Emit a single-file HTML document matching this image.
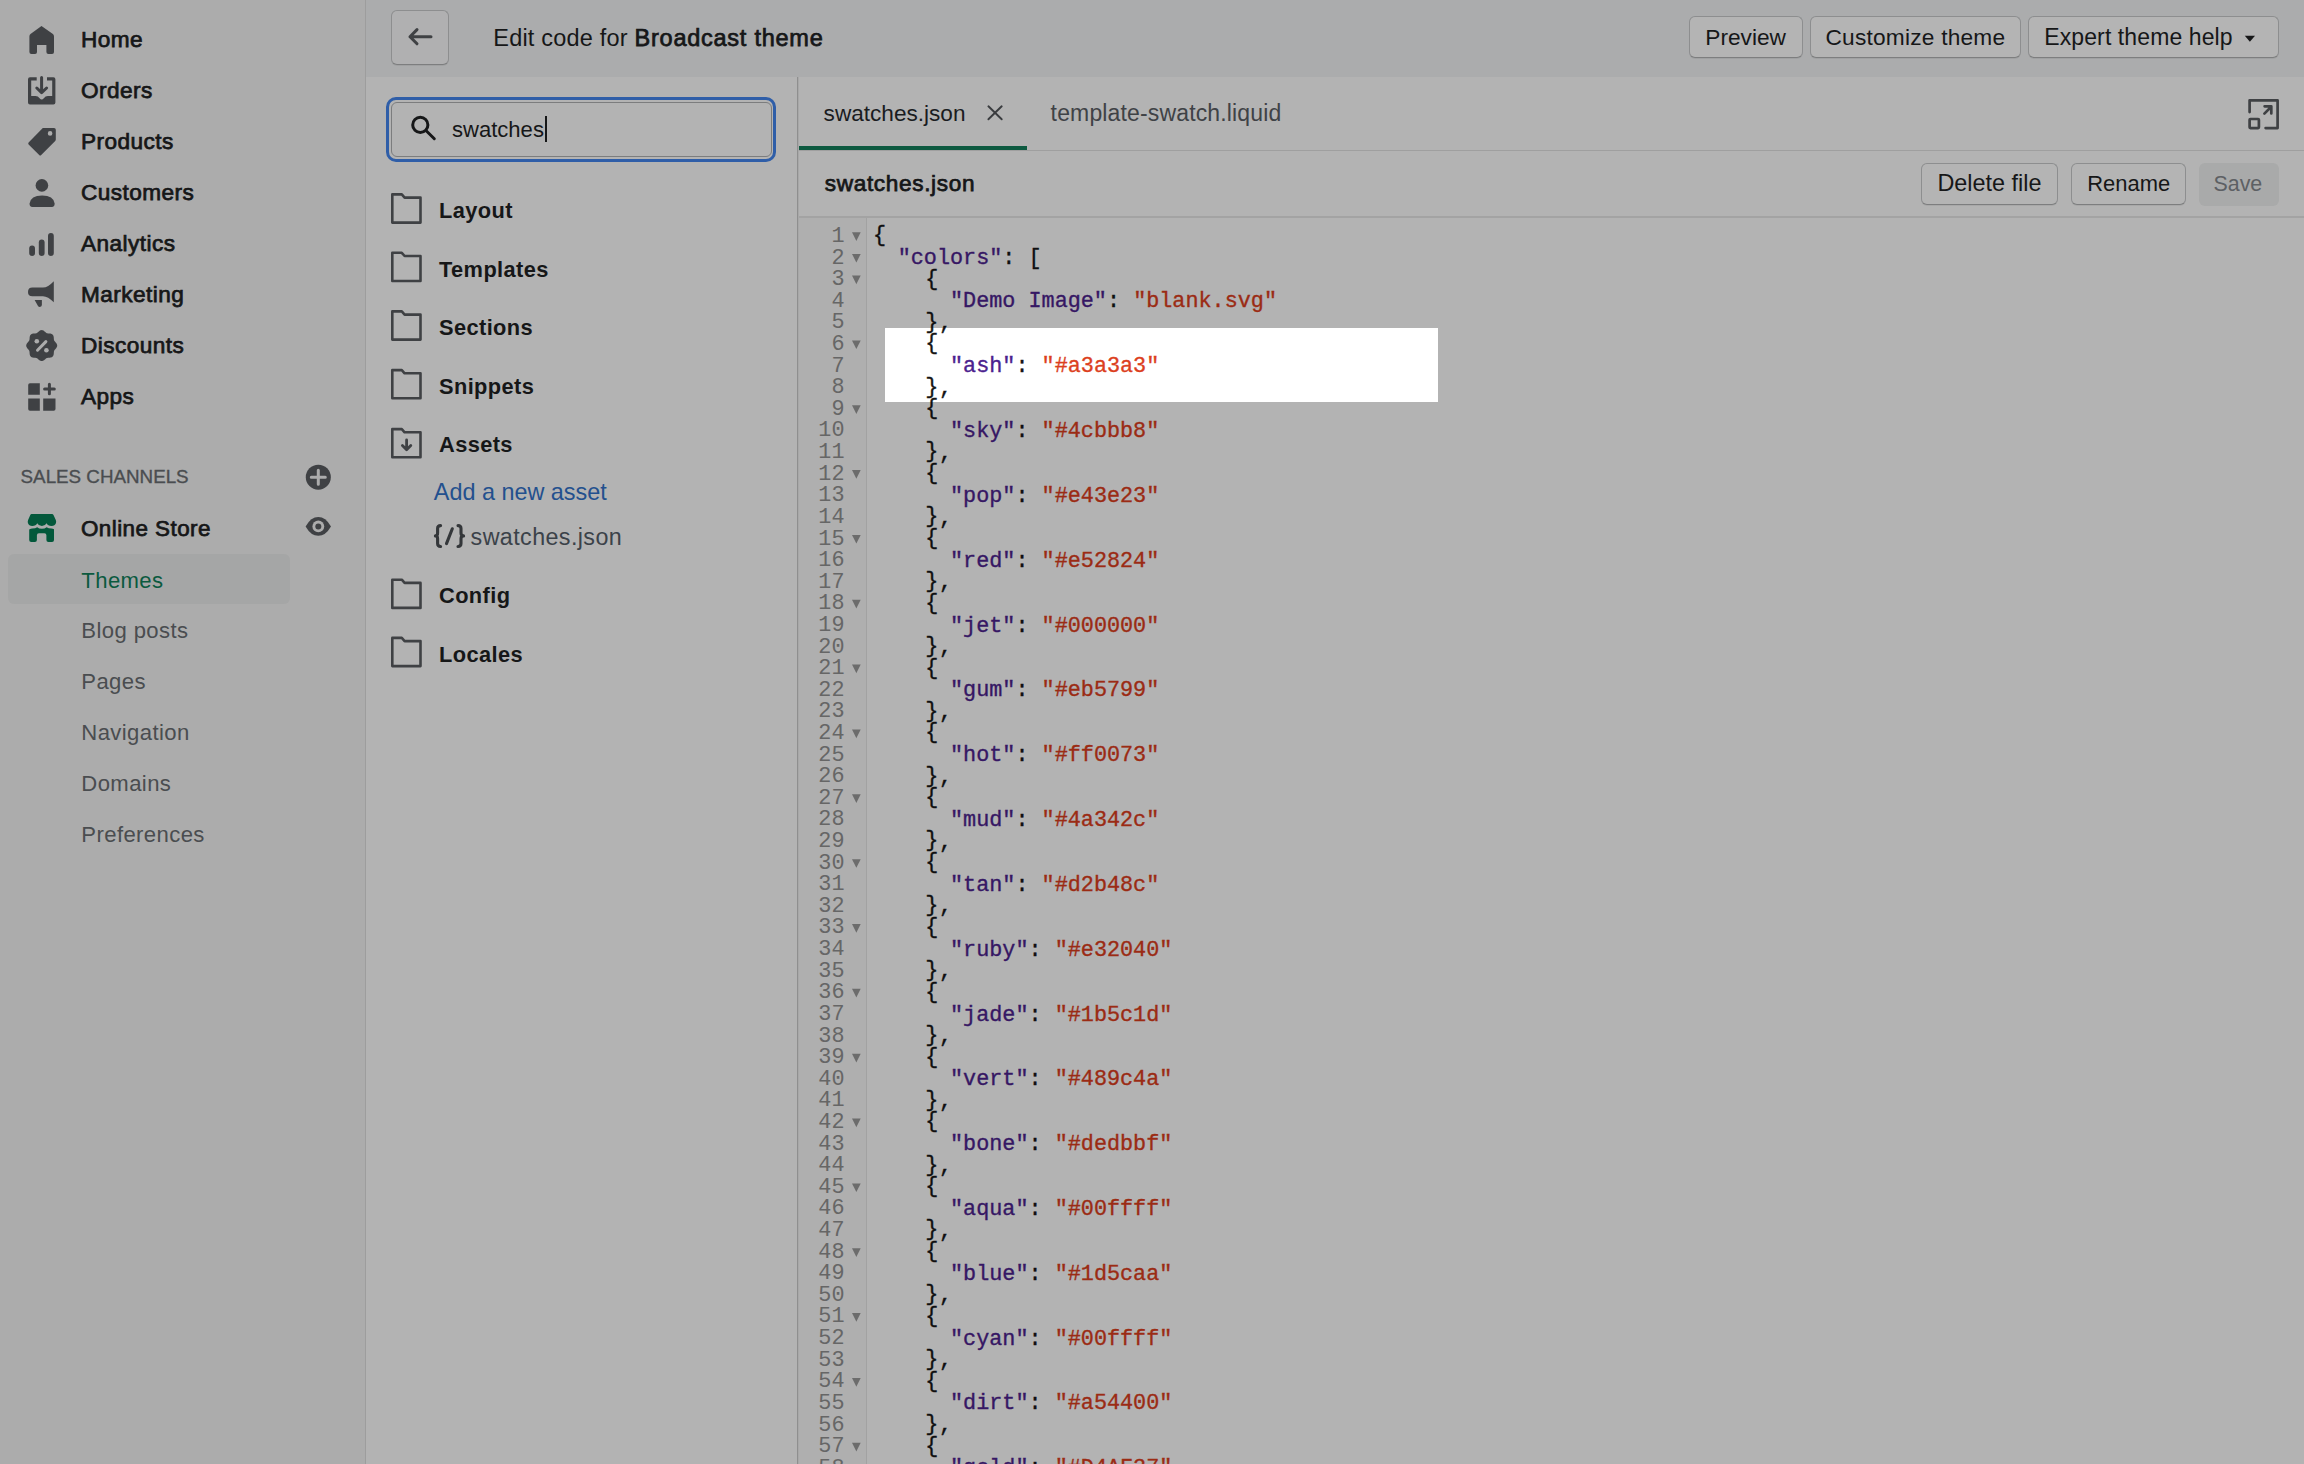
<!DOCTYPE html><html><head><meta charset="utf-8"><title>Edit code</title><style>
html,body{margin:0;padding:0;width:2304px;height:1464px;overflow:hidden;background:#b3b3b3;}
body{position:relative;font-family:"Liberation Sans", sans-serif;}
.t{position:absolute;white-space:pre;}
.btn{position:absolute;border:1px solid #8d8e8f;border-bottom-color:#7d7e7f;border-radius:6px;background:#b4b4b4;box-shadow:0 1px 0 rgba(0,0,0,0.06);}
.code{position:absolute;font-family:"Liberation Mono", monospace;font-size:21.8px;line-height:21.616px;white-space:pre;-webkit-text-stroke:0.35px currentColor;}
.cl{height:21.616px;}
.gn{text-align:right;color:#666666;-webkit-text-stroke:0px;}
.p{color:#0f0f10;}
.k{color:#361764;}
.s{color:#9b2b14;}
.b{position:relative;left:1.5px;top:-1.2px;}
.c{position:relative;left:2px;}
.hl .p{color:#151515;}
.hl .k{color:#4b228e;}
.hl .s{color:#dc3f1e;}
</style></head><body>
<div style="position:absolute;left:0;top:0;width:365px;height:1464px;background:#acacac"></div><div style="position:absolute;left:365px;top:0;width:1px;height:1464px;background:#9d9d9d"></div><div style="position:absolute;left:366px;top:0;width:1938px;height:77px;background:#abacad"></div><div style="position:absolute;left:366px;top:77px;width:432px;height:1387px;background:#b3b3b3"></div><div style="position:absolute;left:797px;top:77px;width:1px;height:1387px;background:#8f8f8f"></div><div style="position:absolute;left:798px;top:77px;width:1px;height:1387px;background:#a8a8a8"></div><div style="position:absolute;left:799px;top:77px;width:1505px;height:1387px;background:#b3b3b3"></div><div style="position:absolute;left:799px;top:150px;width:1505px;height:1px;background:#9f9f9f"></div><div style="position:absolute;left:799px;top:146px;width:228px;height:4px;background:#0d5a40"></div><div style="position:absolute;left:799px;top:216px;width:1505px;height:2px;background:#a3a3a3"></div><div style="position:absolute;left:799px;top:218px;width:67px;height:1246px;background:#afafaf"></div><div style="position:absolute;left:866px;top:218px;width:1px;height:1246px;background:#a2a2a2"></div><div style="position:absolute;left:8px;top:554.2px;width:282px;height:49.4px;border-radius:6px;background:#a5a6a6"></div><div class="t" style="left:81.0px;top:29.46px;font-size:22.6px;line-height:22.6px;color:#161718;font-weight:400;-webkit-text-stroke:0.75px currentColor;letter-spacing:0.45px;">Home</div>
<div class="t" style="left:81.0px;top:80.46px;font-size:22.6px;line-height:22.6px;color:#161718;font-weight:400;-webkit-text-stroke:0.75px currentColor;letter-spacing:0.45px;">Orders</div>
<div class="t" style="left:81.0px;top:131.46px;font-size:22.6px;line-height:22.6px;color:#161718;font-weight:400;-webkit-text-stroke:0.75px currentColor;letter-spacing:0.45px;">Products</div>
<div class="t" style="left:81.0px;top:182.46px;font-size:22.6px;line-height:22.6px;color:#161718;font-weight:400;-webkit-text-stroke:0.75px currentColor;letter-spacing:0.45px;">Customers</div>
<div class="t" style="left:81.0px;top:233.46px;font-size:22.6px;line-height:22.6px;color:#161718;font-weight:400;-webkit-text-stroke:0.75px currentColor;letter-spacing:0.45px;">Analytics</div>
<div class="t" style="left:81.0px;top:284.46px;font-size:22.6px;line-height:22.6px;color:#161718;font-weight:400;-webkit-text-stroke:0.75px currentColor;letter-spacing:0.45px;">Marketing</div>
<div class="t" style="left:81.0px;top:335.46px;font-size:22.6px;line-height:22.6px;color:#161718;font-weight:400;-webkit-text-stroke:0.75px currentColor;letter-spacing:0.45px;">Discounts</div>
<div class="t" style="left:81.0px;top:386.46px;font-size:22.6px;line-height:22.6px;color:#161718;font-weight:400;-webkit-text-stroke:0.75px currentColor;letter-spacing:0.45px;">Apps</div>
<div class="t" style="left:20.6px;top:467.98px;font-size:18.8px;line-height:18.8px;color:#4a4d50;font-weight:400;-webkit-text-stroke:0.35px currentColor;">SALES CHANNELS</div>
<div class="t" style="left:81.0px;top:517.53px;font-size:22.4px;line-height:22.4px;color:#161718;font-weight:400;-webkit-text-stroke:0.75px currentColor;letter-spacing:0.45px;">Online Store</div>
<div class="t" style="left:81.3px;top:569.69px;font-size:22.1px;line-height:22.1px;color:#0b5a3f;font-weight:400;letter-spacing:0.4px;">Themes</div>
<div class="t" style="left:81.3px;top:619.89px;font-size:22.1px;line-height:22.1px;color:#4a4d50;font-weight:400;letter-spacing:0.4px;">Blog posts</div>
<div class="t" style="left:81.3px;top:670.89px;font-size:22.1px;line-height:22.1px;color:#4a4d50;font-weight:400;letter-spacing:0.4px;">Pages</div>
<div class="t" style="left:81.3px;top:721.89px;font-size:22.1px;line-height:22.1px;color:#4a4d50;font-weight:400;letter-spacing:0.4px;">Navigation</div>
<div class="t" style="left:81.3px;top:772.89px;font-size:22.1px;line-height:22.1px;color:#4a4d50;font-weight:400;letter-spacing:0.4px;">Domains</div>
<div class="t" style="left:81.3px;top:823.89px;font-size:22.1px;line-height:22.1px;color:#4a4d50;font-weight:400;letter-spacing:0.4px;">Preferences</div>
<div class="btn" style="left:391px;top:9.6px;width:56px;height:53px;background:#b0b0b1"></div><div class="t" style="left:493.3px;top:27.10px;font-size:23.5px;line-height:23.5px;color:#161718;font-weight:400;"><span style="letter-spacing:0.2px">Edit code for </span><span style="-webkit-text-stroke:0.75px currentColor;letter-spacing:0.75px">Broadcast theme</span></div>
<div class="btn" style="left:1688.5px;top:15.5px;width:112.0px;height:40.5px;"></div>
<div class="t" style="left:1705.3px;top:26.08px;font-size:22.7px;line-height:22.7px;color:#161718;font-weight:400;">Preview</div>
<div class="btn" style="left:1810px;top:15.5px;width:209px;height:40.5px;"></div>
<div class="t" style="left:1825.5px;top:26.08px;font-size:22.7px;line-height:22.7px;color:#161718;font-weight:400;letter-spacing:0.22px;">Customize theme</div>
<div class="btn" style="left:2028px;top:15.5px;width:248.5px;height:40.5px;"></div>
<div class="t" style="left:2044.3px;top:25.83px;font-size:23.0px;line-height:23.0px;color:#161718;font-weight:400;letter-spacing:0.1px;">Expert theme help</div>
<div style="position:absolute;left:386px;top:97px;width:384px;height:59px;border:3px solid #2f5ea8;border-radius:10px;box-sizing:content-box"></div><div style="position:absolute;left:390.5px;top:101.5px;width:379px;height:53px;border:1.5px solid #7c7d7e;border-radius:6px;background:#b3b3b3"></div><div class="t" style="left:452.0px;top:119.33px;font-size:22.05px;line-height:22.05px;color:#161718;font-weight:400;">swatches</div>
<div style="position:absolute;left:545px;top:116px;width:2px;height:26px;background:#161718"></div><div class="t" style="left:439.0px;top:200.14px;font-size:21.8px;line-height:21.8px;color:#161718;font-weight:700;letter-spacing:0.4px;">Layout</div>
<div class="t" style="left:439.0px;top:258.54px;font-size:21.8px;line-height:21.8px;color:#161718;font-weight:700;letter-spacing:0.4px;">Templates</div>
<div class="t" style="left:439.0px;top:317.14px;font-size:21.8px;line-height:21.8px;color:#161718;font-weight:700;letter-spacing:0.4px;">Sections</div>
<div class="t" style="left:439.0px;top:375.84px;font-size:21.8px;line-height:21.8px;color:#161718;font-weight:700;letter-spacing:0.4px;">Snippets</div>
<div class="t" style="left:439.0px;top:434.14px;font-size:21.8px;line-height:21.8px;color:#161718;font-weight:700;letter-spacing:0.4px;">Assets</div>
<div class="t" style="left:439.0px;top:585.44px;font-size:21.8px;line-height:21.8px;color:#161718;font-weight:700;letter-spacing:0.4px;">Config</div>
<div class="t" style="left:439.0px;top:643.64px;font-size:21.8px;line-height:21.8px;color:#161718;font-weight:700;letter-spacing:0.4px;">Locales</div>
<div class="t" style="left:433.8px;top:480.99px;font-size:23.4px;line-height:23.4px;color:#23508e;font-weight:400;">Add a new asset</div>
<div class="t" style="left:470.6px;top:525.67px;font-size:23.3px;line-height:23.3px;color:#3b4249;font-weight:400;letter-spacing:0.4px;">swatches.json</div>
<div class="t" style="left:823.6px;top:102.76px;font-size:22.6px;line-height:22.6px;color:#1a1c1f;font-weight:400;">swatches.json</div>
<div class="t" style="left:1050.6px;top:102.33px;font-size:23.0px;line-height:23.0px;color:#3f4246;font-weight:400;letter-spacing:0.15px;">template-swatch.liquid</div>
<div class="t" style="left:824.8px;top:172.76px;font-size:22.6px;line-height:22.6px;color:#161718;font-weight:400;-webkit-text-stroke:0.75px currentColor;letter-spacing:0.65px;">swatches.json</div>
<div class="btn" style="left:1921px;top:162.7px;width:135px;height:39.900000000000006px;"></div>
<div class="t" style="left:1937.4px;top:172.09px;font-size:23.4px;line-height:23.4px;color:#161718;font-weight:400;">Delete file</div>
<div class="btn" style="left:2070.7px;top:162.7px;width:112.90000000000009px;height:39.900000000000006px;"></div>
<div class="t" style="left:2087.2px;top:173.31px;font-size:21.95px;line-height:21.95px;color:#161718;font-weight:400;">Rename</div>
<div style="position:absolute;left:2199px;top:162.5px;width:80px;height:43px;border-radius:6px;background:#a9aaaa"></div><div class="t" style="left:2213.5px;top:173.78px;font-size:21.4px;line-height:21.4px;color:#5d6064;font-weight:400;">Save</div>
<div class="code" style="left:871.5px;top:226.59px"><div class="cl"><span class="p"><span class="b">{</span></span></div><div class="cl">  <span class="k">"colors"</span><span class="p">: [</span></div><div class="cl">    <span class="p"><span class="b">{</span></span></div><div class="cl">      <span class="k">"Demo Image"</span><span class="p">: </span><span class="s">"blank.svg"</span></div><div class="cl">    <span class="p"><span class="b">}</span><span class="c">,</span></span></div><div class="cl">    <span class="p"><span class="b">{</span></span></div><div class="cl">      <span class="k">"ash"</span><span class="p">: </span><span class="s">"#a3a3a3"</span></div><div class="cl">    <span class="p"><span class="b">}</span><span class="c">,</span></span></div><div class="cl">    <span class="p"><span class="b">{</span></span></div><div class="cl">      <span class="k">"sky"</span><span class="p">: </span><span class="s">"#4cbbb8"</span></div><div class="cl">    <span class="p"><span class="b">}</span><span class="c">,</span></span></div><div class="cl">    <span class="p"><span class="b">{</span></span></div><div class="cl">      <span class="k">"pop"</span><span class="p">: </span><span class="s">"#e43e23"</span></div><div class="cl">    <span class="p"><span class="b">}</span><span class="c">,</span></span></div><div class="cl">    <span class="p"><span class="b">{</span></span></div><div class="cl">      <span class="k">"red"</span><span class="p">: </span><span class="s">"#e52824"</span></div><div class="cl">    <span class="p"><span class="b">}</span><span class="c">,</span></span></div><div class="cl">    <span class="p"><span class="b">{</span></span></div><div class="cl">      <span class="k">"jet"</span><span class="p">: </span><span class="s">"#000000"</span></div><div class="cl">    <span class="p"><span class="b">}</span><span class="c">,</span></span></div><div class="cl">    <span class="p"><span class="b">{</span></span></div><div class="cl">      <span class="k">"gum"</span><span class="p">: </span><span class="s">"#eb5799"</span></div><div class="cl">    <span class="p"><span class="b">}</span><span class="c">,</span></span></div><div class="cl">    <span class="p"><span class="b">{</span></span></div><div class="cl">      <span class="k">"hot"</span><span class="p">: </span><span class="s">"#ff0073"</span></div><div class="cl">    <span class="p"><span class="b">}</span><span class="c">,</span></span></div><div class="cl">    <span class="p"><span class="b">{</span></span></div><div class="cl">      <span class="k">"mud"</span><span class="p">: </span><span class="s">"#4a342c"</span></div><div class="cl">    <span class="p"><span class="b">}</span><span class="c">,</span></span></div><div class="cl">    <span class="p"><span class="b">{</span></span></div><div class="cl">      <span class="k">"tan"</span><span class="p">: </span><span class="s">"#d2b48c"</span></div><div class="cl">    <span class="p"><span class="b">}</span><span class="c">,</span></span></div><div class="cl">    <span class="p"><span class="b">{</span></span></div><div class="cl">      <span class="k">"ruby"</span><span class="p">: </span><span class="s">"#e32040"</span></div><div class="cl">    <span class="p"><span class="b">}</span><span class="c">,</span></span></div><div class="cl">    <span class="p"><span class="b">{</span></span></div><div class="cl">      <span class="k">"jade"</span><span class="p">: </span><span class="s">"#1b5c1d"</span></div><div class="cl">    <span class="p"><span class="b">}</span><span class="c">,</span></span></div><div class="cl">    <span class="p"><span class="b">{</span></span></div><div class="cl">      <span class="k">"vert"</span><span class="p">: </span><span class="s">"#489c4a"</span></div><div class="cl">    <span class="p"><span class="b">}</span><span class="c">,</span></span></div><div class="cl">    <span class="p"><span class="b">{</span></span></div><div class="cl">      <span class="k">"bone"</span><span class="p">: </span><span class="s">"#dedbbf"</span></div><div class="cl">    <span class="p"><span class="b">}</span><span class="c">,</span></span></div><div class="cl">    <span class="p"><span class="b">{</span></span></div><div class="cl">      <span class="k">"aqua"</span><span class="p">: </span><span class="s">"#00ffff"</span></div><div class="cl">    <span class="p"><span class="b">}</span><span class="c">,</span></span></div><div class="cl">    <span class="p"><span class="b">{</span></span></div><div class="cl">      <span class="k">"blue"</span><span class="p">: </span><span class="s">"#1d5caa"</span></div><div class="cl">    <span class="p"><span class="b">}</span><span class="c">,</span></span></div><div class="cl">    <span class="p"><span class="b">{</span></span></div><div class="cl">      <span class="k">"cyan"</span><span class="p">: </span><span class="s">"#00ffff"</span></div><div class="cl">    <span class="p"><span class="b">}</span><span class="c">,</span></span></div><div class="cl">    <span class="p"><span class="b">{</span></span></div><div class="cl">      <span class="k">"dirt"</span><span class="p">: </span><span class="s">"#a54400"</span></div><div class="cl">    <span class="p"><span class="b">}</span><span class="c">,</span></span></div><div class="cl">    <span class="p"><span class="b">{</span></span></div><div class="cl">      <span class="k">"gold"</span><span class="p">: </span><span class="s">"#D4AF37"</span></div><div class="cl">    <span class="p"><span class="b">}</span><span class="c">,</span></span></div></div><div class="code gn" style="left:799px;top:225.99px;width:45.5px"><div class="cl">1</div><div class="cl">2</div><div class="cl">3</div><div class="cl">4</div><div class="cl">5</div><div class="cl">6</div><div class="cl">7</div><div class="cl">8</div><div class="cl">9</div><div class="cl">10</div><div class="cl">11</div><div class="cl">12</div><div class="cl">13</div><div class="cl">14</div><div class="cl">15</div><div class="cl">16</div><div class="cl">17</div><div class="cl">18</div><div class="cl">19</div><div class="cl">20</div><div class="cl">21</div><div class="cl">22</div><div class="cl">23</div><div class="cl">24</div><div class="cl">25</div><div class="cl">26</div><div class="cl">27</div><div class="cl">28</div><div class="cl">29</div><div class="cl">30</div><div class="cl">31</div><div class="cl">32</div><div class="cl">33</div><div class="cl">34</div><div class="cl">35</div><div class="cl">36</div><div class="cl">37</div><div class="cl">38</div><div class="cl">39</div><div class="cl">40</div><div class="cl">41</div><div class="cl">42</div><div class="cl">43</div><div class="cl">44</div><div class="cl">45</div><div class="cl">46</div><div class="cl">47</div><div class="cl">48</div><div class="cl">49</div><div class="cl">50</div><div class="cl">51</div><div class="cl">52</div><div class="cl">53</div><div class="cl">54</div><div class="cl">55</div><div class="cl">56</div><div class="cl">57</div><div class="cl">58</div><div class="cl">59</div></div><div style="position:absolute;left:885px;top:328.1px;width:553px;height:74.2px;background:#fff;overflow:hidden"><div class="code hl" style="left:-13.5px;top:-101.51px"><div class="cl"><span class="p"><span class="b">{</span></span></div><div class="cl">  <span class="k">"colors"</span><span class="p">: [</span></div><div class="cl">    <span class="p"><span class="b">{</span></span></div><div class="cl">      <span class="k">"Demo Image"</span><span class="p">: </span><span class="s">"blank.svg"</span></div><div class="cl">    <span class="p"><span class="b">}</span><span class="c">,</span></span></div><div class="cl">    <span class="p"><span class="b">{</span></span></div><div class="cl">      <span class="k">"ash"</span><span class="p">: </span><span class="s">"#a3a3a3"</span></div><div class="cl">    <span class="p"><span class="b">}</span><span class="c">,</span></span></div><div class="cl">    <span class="p"><span class="b">{</span></span></div><div class="cl">      <span class="k">"sky"</span><span class="p">: </span><span class="s">"#4cbbb8"</span></div><div class="cl">    <span class="p"><span class="b">}</span><span class="c">,</span></span></div><div class="cl">    <span class="p"><span class="b">{</span></span></div><div class="cl">      <span class="k">"pop"</span><span class="p">: </span><span class="s">"#e43e23"</span></div><div class="cl">    <span class="p"><span class="b">}</span><span class="c">,</span></span></div><div class="cl">    <span class="p"><span class="b">{</span></span></div><div class="cl">      <span class="k">"red"</span><span class="p">: </span><span class="s">"#e52824"</span></div><div class="cl">    <span class="p"><span class="b">}</span><span class="c">,</span></span></div><div class="cl">    <span class="p"><span class="b">{</span></span></div><div class="cl">      <span class="k">"jet"</span><span class="p">: </span><span class="s">"#000000"</span></div><div class="cl">    <span class="p"><span class="b">}</span><span class="c">,</span></span></div><div class="cl">    <span class="p"><span class="b">{</span></span></div><div class="cl">      <span class="k">"gum"</span><span class="p">: </span><span class="s">"#eb5799"</span></div><div class="cl">    <span class="p"><span class="b">}</span><span class="c">,</span></span></div><div class="cl">    <span class="p"><span class="b">{</span></span></div><div class="cl">      <span class="k">"hot"</span><span class="p">: </span><span class="s">"#ff0073"</span></div><div class="cl">    <span class="p"><span class="b">}</span><span class="c">,</span></span></div><div class="cl">    <span class="p"><span class="b">{</span></span></div><div class="cl">      <span class="k">"mud"</span><span class="p">: </span><span class="s">"#4a342c"</span></div><div class="cl">    <span class="p"><span class="b">}</span><span class="c">,</span></span></div><div class="cl">    <span class="p"><span class="b">{</span></span></div><div class="cl">      <span class="k">"tan"</span><span class="p">: </span><span class="s">"#d2b48c"</span></div><div class="cl">    <span class="p"><span class="b">}</span><span class="c">,</span></span></div><div class="cl">    <span class="p"><span class="b">{</span></span></div><div class="cl">      <span class="k">"ruby"</span><span class="p">: </span><span class="s">"#e32040"</span></div><div class="cl">    <span class="p"><span class="b">}</span><span class="c">,</span></span></div><div class="cl">    <span class="p"><span class="b">{</span></span></div><div class="cl">      <span class="k">"jade"</span><span class="p">: </span><span class="s">"#1b5c1d"</span></div><div class="cl">    <span class="p"><span class="b">}</span><span class="c">,</span></span></div><div class="cl">    <span class="p"><span class="b">{</span></span></div><div class="cl">      <span class="k">"vert"</span><span class="p">: </span><span class="s">"#489c4a"</span></div><div class="cl">    <span class="p"><span class="b">}</span><span class="c">,</span></span></div><div class="cl">    <span class="p"><span class="b">{</span></span></div><div class="cl">      <span class="k">"bone"</span><span class="p">: </span><span class="s">"#dedbbf"</span></div><div class="cl">    <span class="p"><span class="b">}</span><span class="c">,</span></span></div><div class="cl">    <span class="p"><span class="b">{</span></span></div><div class="cl">      <span class="k">"aqua"</span><span class="p">: </span><span class="s">"#00ffff"</span></div><div class="cl">    <span class="p"><span class="b">}</span><span class="c">,</span></span></div><div class="cl">    <span class="p"><span class="b">{</span></span></div><div class="cl">      <span class="k">"blue"</span><span class="p">: </span><span class="s">"#1d5caa"</span></div><div class="cl">    <span class="p"><span class="b">}</span><span class="c">,</span></span></div><div class="cl">    <span class="p"><span class="b">{</span></span></div><div class="cl">      <span class="k">"cyan"</span><span class="p">: </span><span class="s">"#00ffff"</span></div><div class="cl">    <span class="p"><span class="b">}</span><span class="c">,</span></span></div><div class="cl">    <span class="p"><span class="b">{</span></span></div><div class="cl">      <span class="k">"dirt"</span><span class="p">: </span><span class="s">"#a54400"</span></div><div class="cl">    <span class="p"><span class="b">}</span><span class="c">,</span></span></div><div class="cl">    <span class="p"><span class="b">{</span></span></div><div class="cl">      <span class="k">"gold"</span><span class="p">: </span><span class="s">"#D4AF37"</span></div><div class="cl">    <span class="p"><span class="b">}</span><span class="c">,</span></span></div></div></div><svg style="position:absolute;left:0;top:0" width="2304" height="1464" viewBox="0 0 2304 1464"><path fill="#3f4144" d="M41.5 26.1 L52.9 34.1 Q54 34.9 54 36.4 V52 Q54 54 52 54 H48.4 Q46.4 54 46.4 52 V44.9 H37 V52 Q37 54 35 54 H31.4 Q29.4 54 29.4 52 V36.4 Q29.4 34.9 30.5 34.1 Z"/><path fill="#3f4144" d="M30 77.2 H36.7 V80.6 H31.2 V95.9 H35.5 Q38 95.9 39.6 98.2 Q41.7 100.6 43.8 98.2 Q45.4 95.9 47.9 95.9 H52.2 V80.6 H47 V77.2 H53.4 Q55.4 77.2 55.4 79.2 V102.6 Q55.4 104.6 53.4 104.6 H30 Q28 104.6 28 102.6 V79.2 Q28 77.2 30 77.2 Z"/><path fill="none" stroke="#3f4144" stroke-width="3" stroke-linecap="round" stroke-linejoin="round" d="M41.6 77.6 V92 M36.8 88 L41.6 92.6 L46.6 88"/><path fill="#3f4144" fill-rule="evenodd" d="M42.8 128 H54 Q55.8 128 55.8 129.8 V139.6 Q55.8 140.4 55.2 141 L41.2 155 Q40.2 156 39.2 155 L28.6 144.4 Q27.8 143.5 28.6 142.6 Z M50.1 133.4 m-2.3 0 a2.3 2.3 0 1 0 4.6 0 a2.3 2.3 0 1 0 -4.6 0 Z"/><circle fill="#3f4144" cx="41.9" cy="185.4" r="6.3"/><path fill="#3f4144" d="M29.6 203.6 Q30.6 195.6 42.1 195.6 Q53.6 195.6 54.6 203.6 Q54.8 207 51.8 207 H32.4 Q29.4 207 29.6 203.6 Z"/><rect fill="#3f4144" x="29.2" y="245.6" width="5.8" height="10.3" rx="2.9"/><rect fill="#3f4144" x="38.8" y="239.5" width="5.8" height="16.4" rx="2.9"/><rect fill="#3f4144" x="48" y="233" width="5.8" height="22.9" rx="2.9"/><path fill="#3f4144" d="M32.4 287.6 H43 Q48 287.4 53.8 281.2 V302.3 Q48 296.4 43 296.2 H32.4 Q28 296.2 28 291.9 Q28 287.6 32.4 287.6 Z"/><path fill="#3f4144" d="M34.6 299.9 H41.9 V304.8 Q41.9 306.9 39.9 306.9 Q38.6 306.9 38 305.9 Z"/><path fill="#3f4144" d="M41.70 330.10 L42.31 330.16 L42.90 330.34 L43.47 330.62 L44.02 330.97 L44.53 331.38 L45.01 331.80 L45.48 332.21 L45.93 332.58 L46.39 332.89 L46.87 333.13 L47.37 333.30 L47.92 333.40 L48.50 333.46 L49.11 333.50 L49.76 333.54 L50.40 333.62 L51.04 333.75 L51.64 333.96 L52.19 334.25 L52.66 334.64 L53.05 335.11 L53.34 335.66 L53.55 336.26 L53.68 336.90 L53.76 337.54 L53.80 338.19 L53.84 338.80 L53.90 339.38 L54.00 339.93 L54.17 340.43 L54.41 340.91 L54.72 341.37 L55.09 341.82 L55.50 342.29 L55.92 342.77 L56.33 343.28 L56.68 343.83 L56.96 344.40 L57.14 344.99 L57.20 345.60 L57.14 346.21 L56.96 346.80 L56.68 347.37 L56.33 347.92 L55.92 348.43 L55.50 348.91 L55.09 349.38 L54.72 349.83 L54.41 350.29 L54.17 350.77 L54.00 351.27 L53.90 351.82 L53.84 352.40 L53.80 353.01 L53.76 353.66 L53.68 354.30 L53.55 354.94 L53.34 355.54 L53.05 356.09 L52.66 356.56 L52.19 356.95 L51.64 357.24 L51.04 357.45 L50.40 357.58 L49.76 357.66 L49.11 357.70 L48.50 357.74 L47.92 357.80 L47.37 357.90 L46.87 358.07 L46.39 358.31 L45.93 358.62 L45.48 358.99 L45.01 359.40 L44.53 359.82 L44.02 360.23 L43.47 360.58 L42.90 360.86 L42.31 361.04 L41.70 361.10 L41.09 361.04 L40.50 360.86 L39.93 360.58 L39.38 360.23 L38.87 359.82 L38.39 359.40 L37.92 358.99 L37.47 358.62 L37.01 358.31 L36.53 358.07 L36.03 357.90 L35.48 357.80 L34.90 357.74 L34.29 357.70 L33.64 357.66 L33.00 357.58 L32.36 357.45 L31.76 357.24 L31.21 356.95 L30.74 356.56 L30.35 356.09 L30.06 355.54 L29.85 354.94 L29.72 354.30 L29.64 353.66 L29.60 353.01 L29.56 352.40 L29.50 351.82 L29.40 351.27 L29.23 350.77 L28.99 350.29 L28.68 349.83 L28.31 349.38 L27.90 348.91 L27.48 348.43 L27.07 347.92 L26.72 347.37 L26.44 346.80 L26.26 346.21 L26.20 345.60 L26.26 344.99 L26.44 344.40 L26.72 343.83 L27.07 343.28 L27.48 342.77 L27.90 342.29 L28.31 341.82 L28.68 341.37 L28.99 340.91 L29.23 340.43 L29.40 339.93 L29.50 339.38 L29.56 338.80 L29.60 338.19 L29.64 337.54 L29.72 336.90 L29.85 336.26 L30.06 335.66 L30.35 335.11 L30.74 334.64 L31.21 334.25 L31.76 333.96 L32.36 333.75 L33.00 333.62 L33.64 333.54 L34.29 333.50 L34.90 333.46 L35.48 333.40 L36.03 333.30 L36.53 333.13 L37.01 332.89 L37.47 332.58 L37.92 332.21 L38.39 331.80 L38.87 331.38 L39.38 330.97 L39.93 330.62 L40.50 330.34 L41.09 330.16 L41.70 330.10 Z"/><circle fill="#acacac" cx="36.8" cy="341.2" r="2.3"/><circle fill="#acacac" cx="46.4" cy="350.2" r="2.3"/><path stroke="#acacac" stroke-width="3" stroke-linecap="round" d="M37.5 350.2 L45.9 341.6"/><path fill="#3f4144" d="M30 383.2 H39.8 V394.8 H28.2 V385 Q28.2 383.2 30 383.2 Z"/><path fill="#3f4144" d="M28.2 398.6 H39.8 V410.8 H30 Q28.2 410.8 28.2 409 Z"/><path fill="#3f4144" d="M43.2 398.6 H55.5 V409 Q55.5 410.8 53.7 410.8 H43.2 Z"/><path stroke="#3f4144" stroke-width="3" stroke-linecap="round" d="M44.6 389 H54.3 M49.4 384.3 V393.7"/><circle fill="#3f4144" cx="318.3" cy="477.2" r="12.5"/><path stroke="#acacac" stroke-width="3" stroke-linecap="round" d="M311.3 477.2 H325.3 M318.3 470.2 V484.2"/><path fill="#3f4144" d="M305.6 526.4 Q311 517 318.3 517 Q325.6 517 331 526.4 Q325.6 535.8 318.3 535.8 Q311 535.8 305.6 526.4 Z"/><circle fill="#acacac" cx="318.3" cy="526.4" r="5.9"/><circle fill="#3f4144" cx="318.3" cy="526.4" r="3"/><path fill="#03583b" d="M31.5 514.1 H52 Q53 514.1 53.5 515 L55.8 520 Q56.4 521.5 56 523 Q55 526 51.5 526 Q47.8 526 46.6 523.3 Q45.2 526 41.9 526 Q38.6 526 37.2 523.3 Q36 526 32.3 526 Q28.8 526 27.9 523 Q27.5 521.5 28.1 520 L30.3 515 Q30.7 514.1 31.5 514.1 Z"/><path fill="#03583b" d="M29.2 529.5 Q31 528.6 32.3 528.6 Q35.5 528.6 37.2 527.3 Q39 528.8 41.9 528.8 Q44.8 528.8 46.6 527.3 Q48.4 528.6 51.5 528.6 Q52.8 528.6 54 529.3 V540 Q54 542 52 542 H48.4 Q46.4 542 46.4 540 V535.2 Q46.4 533.2 44.4 533.2 H38.9 Q36.9 533.2 36.9 535.2 V540 Q36.9 542 34.9 542 H31.2 Q29.2 542 29.2 540 Z"/><path fill="none" stroke="#3f4144" stroke-width="3" stroke-linecap="round" stroke-linejoin="round" d="M410 36.7 H431 M417 29.6 L410 36.7 L417 43.8"/><circle fill="none" stroke="#161718" stroke-width="3" cx="420.3" cy="124.9" r="7.6"/><path stroke="#161718" stroke-width="3" stroke-linecap="round" d="M426.2 130.8 L434.3 138.7"/><path fill="none" stroke="#3f4144" stroke-width="2.6" stroke-linejoin="round" d="M392.3 222.60 V194.40 H401.8 L404.6 197.60 H420.5 V222.60 Z"/><path fill="none" stroke="#3f4144" stroke-width="2.6" stroke-linejoin="round" d="M392.3 281.00 V252.80 H401.8 L404.6 256.00 H420.5 V281.00 Z"/><path fill="none" stroke="#3f4144" stroke-width="2.6" stroke-linejoin="round" d="M392.3 339.60 V311.40 H401.8 L404.6 314.60 H420.5 V339.60 Z"/><path fill="none" stroke="#3f4144" stroke-width="2.6" stroke-linejoin="round" d="M392.3 398.30 V370.10 H401.8 L404.6 373.30 H420.5 V398.30 Z"/><path fill="none" stroke="#3f4144" stroke-width="2.6" stroke-linejoin="round" d="M392.3 457.30 V429.10 H401.8 L404.6 432.30 H420.5 V457.30 Z"/><path fill="none" stroke="#3f4144" stroke-width="2.6" stroke-linejoin="round" d="M392.3 607.90 V579.70 H401.8 L404.6 582.90 H420.5 V607.90 Z"/><path fill="none" stroke="#3f4144" stroke-width="2.6" stroke-linejoin="round" d="M392.3 666.10 V637.90 H401.8 L404.6 641.10 H420.5 V666.10 Z"/><path fill="none" stroke="#3f4144" stroke-width="2.8" stroke-linecap="round" stroke-linejoin="round" d="M406.6 440 V449.4 M402.4 445.6 L406.6 449.8 L410.8 445.6"/><path fill="none" stroke="#34373a" stroke-width="3.1" stroke-linecap="round" stroke-linejoin="round" d="M440.6 525.6 Q437.6 525.6 437.6 528.6 V533 Q437.6 535.9 435.4 535.9 Q437.6 535.9 437.6 538.8 V543.6 Q437.6 546.5 440.6 546.5 M458 525.6 Q461 525.6 461 528.6 V533 Q461 535.9 463.6 535.9 Q461 535.9 461 538.8 V543.6 Q461 546.5 458 546.5 M452.3 528.8 L446.5 543.6"/><path stroke="#3a3c3f" stroke-width="1.9" stroke-linecap="round" d="M988.4 106.3 L1001.7 119.3 M1001.7 106.3 L988.4 119.3"/><path fill="none" stroke="#3f4144" stroke-width="2.7" stroke-linecap="round" stroke-linejoin="round" d="M2249.6 112.1 V100.3 H2277.6 V128.1 H2265.6"/><rect fill="none" stroke="#3f4144" stroke-width="2.7" x="2249.6" y="119" width="9.3" height="9.1" rx="0.8"/><path fill="none" stroke="#3f4144" stroke-width="2.7" stroke-linecap="round" stroke-linejoin="round" d="M2264.4 113.6 L2271.2 106.8 M2264.6 106.3 H2271.3 V113.4"/><path fill="#161718" d="M2244.8 35.7 H2255 L2249.9 41.8 Z"/><g fill="#6c6c6c"><path d="M852 232.30 H860.7 L856.35 241.00 Z"/><path d="M852 253.92 H860.7 L856.35 262.62 Z"/><path d="M852 275.53 H860.7 L856.35 284.23 Z"/><path d="M852 340.38 H860.7 L856.35 349.08 Z"/><path d="M852 405.23 H860.7 L856.35 413.93 Z"/><path d="M852 470.08 H860.7 L856.35 478.78 Z"/><path d="M852 534.92 H860.7 L856.35 543.62 Z"/><path d="M852 599.77 H860.7 L856.35 608.47 Z"/><path d="M852 664.62 H860.7 L856.35 673.32 Z"/><path d="M852 729.47 H860.7 L856.35 738.17 Z"/><path d="M852 794.32 H860.7 L856.35 803.02 Z"/><path d="M852 859.16 H860.7 L856.35 867.86 Z"/><path d="M852 924.01 H860.7 L856.35 932.71 Z"/><path d="M852 988.86 H860.7 L856.35 997.56 Z"/><path d="M852 1053.71 H860.7 L856.35 1062.41 Z"/><path d="M852 1118.56 H860.7 L856.35 1127.26 Z"/><path d="M852 1183.40 H860.7 L856.35 1192.10 Z"/><path d="M852 1248.25 H860.7 L856.35 1256.95 Z"/><path d="M852 1313.10 H860.7 L856.35 1321.80 Z"/><path d="M852 1377.95 H860.7 L856.35 1386.65 Z"/><path d="M852 1442.80 H860.7 L856.35 1451.50 Z"/></g></svg>
</body></html>
